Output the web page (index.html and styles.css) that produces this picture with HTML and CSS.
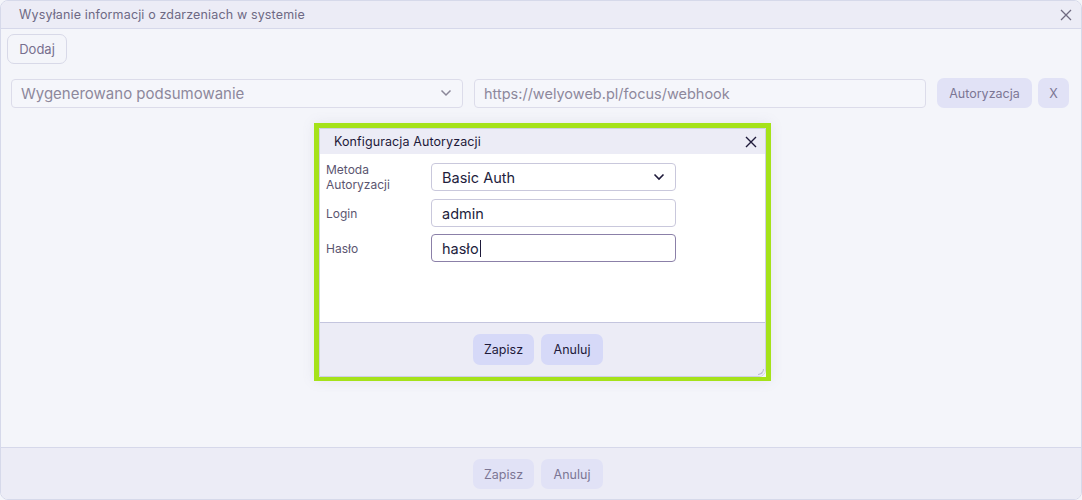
FILE: index.html
```html
<!DOCTYPE html>
<html lang="pl">
<head>
<meta charset="utf-8">
<title>Wysyłanie informacji</title>
<link rel="stylesheet" href="styles.css">
</head>
<body>
<div class="window">
  <div class="win-header">
    <span class="win-title">Wysyłanie informacji o zdarzeniach w systemie</span>
    <svg class="win-close" width="12" height="12" viewBox="0 0 12 12"><path d="M1 1L11 11M11 1L1 11" stroke="#6f6a80" stroke-width="1.3" fill="none"/></svg>
  </div>
  <div class="win-body">
    <div class="toolbar"><button class="btn-outline">Dodaj</button></div>
    <div class="row">
      <div class="field select">
        <span>Wygenerowano podsumowanie</span>
        <svg width="12" height="8" viewBox="0 0 12 8"><path d="M1.5 1.5L6 6L10.5 1.5" stroke="#8a8698" stroke-width="1.5" fill="none"/></svg>
      </div>
      <div class="field"><span>https://welyoweb.pl/focus/webhook</span></div>
      <button class="btn-soft btn-auth">Autoryzacja</button>
      <button class="btn-soft btn-x">X</button>
    </div>
  </div>
  <div class="win-footer">
    <button class="btn-soft btn-foot">Zapisz</button>
    <button class="btn-soft btn-foot">Anuluj</button>
  </div>

  <div class="dialog-frame">
    <div class="dialog">
      <div class="dlg-header">
        <span class="dlg-title">Konfiguracja Autoryzacji</span>
        <svg class="dlg-close" width="12" height="12" viewBox="0 0 12 12"><path d="M1 1L11 11M11 1L1 11" stroke="#1e1a3a" stroke-width="1.4" fill="none"/></svg>
      </div>
      <div class="dlg-body">
        <div class="frow">
          <label class="flabel">Metoda Autoryzacji</label>
          <div class="finput fselect">
            <span>Basic Auth</span>
            <svg width="12" height="8" viewBox="0 0 12 8"><path d="M1.5 1.5L6 6L10.5 1.5" stroke="#1e1a3a" stroke-width="1.6" fill="none"/></svg>
          </div>
        </div>
        <div class="frow">
          <label class="flabel">Login</label>
          <div class="finput"><span>admin</span></div>
        </div>
        <div class="frow">
          <label class="flabel">Hasło</label>
          <div class="finput focused"><span>hasło</span><i class="caret"></i></div>
        </div>
      </div>
      <div class="dlg-footer">
        <button class="btn-dlg">Zapisz</button>
        <button class="btn-dlg">Anuluj</button>
      </div>
      <span class="grip"></span>
    </div>
  </div>
</div>
</body>
</html>
```

FILE: styles.css
```css
* { box-sizing: border-box; }
html, body { margin: 0; padding: 0; }
body {
  font-family: Inter, "Open Sans", "Liberation Sans", sans-serif;
  background: #f4f5fa;
  width: 1082px;
  height: 500px;
  overflow: hidden;
}
button { font-family: inherit; cursor: pointer; }

.window {
  position: relative;
  width: 1082px;
  height: 500px;
  border: 1px solid #d6d9ea;
  border-radius: 8px;
  background: #f4f5fa;
  display: flex;
  flex-direction: column;
  overflow: hidden;
}
.win-header {
  height: 28px;
  flex: none;
  background: #ececf6;
  border-bottom: 1px solid #d6d8ea;
  display: flex;
  align-items: center;
  padding: 0 9px 0 18px;
}
.win-title {
  flex: 1;
  font-size: 12.5px;
  color: #6e6984;
  letter-spacing: 0.15px;
}
.win-close { display: block; }

.win-body {
  flex: 1;
  padding: 5px 12px 0 6px;
}
.toolbar { display: flex; }
.btn-outline {
  width: 60px;
  height: 30px;
  padding: 0;
  border: 1px solid #d8d9e8;
  border-radius: 7px;
  background: #f4f5fa;
  color: #776f8e;
  font-size: 13px;
}
.row {
  display: flex;
  align-items: center;
  margin-top: 14px;
  margin-left: 4px;
  gap: 11px;
}
.field {
  flex: 1;
  height: 29px;
  border: 1px solid #dcdcea;
  border-radius: 4px;
  background: #f5f6fb;
  display: flex;
  align-items: center;
  justify-content: space-between;
  padding: 0 10px 0 9px;
  font-size: 14.5px;
  color: #8d889c;
}
.field.select { font-size: 15px; }
.btn-soft {
  height: 30px;
  border: none;
  border-radius: 7px;
  background: #e1e2f6;
  color: #7c7694;
  font-size: 12.5px;
}
.btn-auth { width: 95px; padding: 0; }
.btn-x { width: 31px; margin-left: -5px; padding: 0; }

.win-footer {
  height: 52px;
  flex: none;
  background: #ececf6;
  border-top: 1px solid #d6d8ea;
  display: flex;
  justify-content: center;
  align-items: flex-start;
  padding-top: 11px;
  padding-right: 6px;
  gap: 7px;
}
.btn-foot { width: 61px; padding: 0; font-size: 12.5px; }
.btn-foot + .btn-foot { width: 62px; }

/* dialog */
.dialog-frame {
  position: absolute;
  left: 313px;
  top: 122px;
  width: 457px;
  height: 258px;
  border: 5px solid #a5e21a;
  border-bottom-width: 4px;
  box-shadow: 0 0 12px rgba(120, 120, 160, 0.12);
}
.dialog {
  position: relative;
  width: 100%;
  height: 100%;
  background: #fff;
  border: 1px solid #cfd0e4;
  border-radius: 0 0 7px 0;
  display: flex;
  flex-direction: column;
  overflow: hidden;
}
.dlg-header {
  height: 25px;
  flex: none;
  background: #ececf6;
  display: flex;
  align-items: center;
  padding: 0 8px 0 14px;
}
.dlg-title {
  flex: 1;
  font-size: 12.5px;
  color: #1e1a3a;
  letter-spacing: 0.1px;
}
.dlg-body {
  flex: 1;
  padding: 8px 0 0 6px;
  display: flex;
  flex-direction: column;
  gap: 7px;
}
.frow {
  display: flex;
  align-items: center;
}
.flabel {
  width: 105px;
  font-size: 12px;
  line-height: 15px;
  color: #5b5570;
}
.finput {
  width: 245px;
  height: 28px;
  border: 1px solid #c9c8dc;
  border-radius: 4px;
  display: flex;
  align-items: center;
  justify-content: space-between;
  padding: 0 10px 0 10px;
  font-size: 14.5px;
  color: #221d3c;
}
.finput.focused {
  justify-content: flex-start;
  border-color: #8b80a8;
}
.caret {
  display: inline-block;
  width: 1px;
  height: 17px;
  background: #1e1a3a;
  margin-left: 1px;
}
.dlg-footer {
  height: 54px;
  flex: none;
  background: #ececf6;
  border-top: 1px solid #c4c5de;
  display: flex;
  justify-content: center;
  align-items: flex-start;
  padding-top: 11px;
  padding-right: 9px;
  gap: 7px;
}
.btn-dlg {
  width: 61px;
  height: 31px;
  border: none;
  border-radius: 7px;
  background: #d6d9f8;
  color: #1e1a3a;
  font-size: 12.5px;
  padding: 0;
}
.btn-dlg + .btn-dlg { width: 62px; }
.grip {
  position: absolute;
  right: 1px;
  bottom: 1px;
  width: 6px;
  height: 6px;
  border-right: 1px solid #b8b9d0;
  border-bottom: 1px solid #b8b9d0;
  border-bottom-right-radius: 6px;
}
```
